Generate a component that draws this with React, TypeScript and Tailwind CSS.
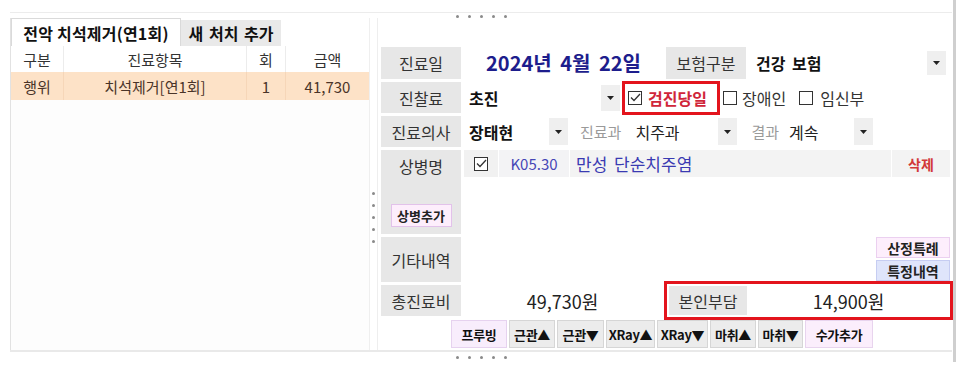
import React from "react";

const Caret = () => (
  <svg width="7" height="4" viewBox="0 0 7 4">
    <path d="M0 0h7L3.5 4z" fill="#222" />
  </svg>
);

const Drop = ({ h = "h-[24px]" }: { h?: string }) => (
  <div className={`w-[19px] ${h} bg-[#efefef] flex items-center justify-center shrink-0`}>
    <Caret />
  </div>
);

const Check = ({ checked = false }: { checked?: boolean }) => (
  <div className="w-[14px] h-[14px] border border-[#333] bg-white flex items-center justify-center shrink-0">
    {checked && (
      <svg width="11" height="9" viewBox="0 0 11 9">
        <path d="M1 4.5l3 3L10 1" fill="none" stroke="#333" strokeWidth="1.3" />
      </svg>
    )}
  </div>
);

const Label = ({ children }: { children: React.ReactNode }) => (
  <div className="w-[80px] shrink-0 bg-[#e7e7e7] flex items-center justify-center text-[16px] text-[#333]">
    {children}
  </div>
);

const Dots = ({ vertical = false }: { vertical?: boolean }) => (
  <div className={`flex ${vertical ? "flex-col gap-[9px]" : "gap-[9px]"}`}>
    {[0, 1, 2, 3, 4].map((i) => (
      <div key={i} className="w-[3px] h-[3px] rounded-full bg-[#8a8a8a]" />
    ))}
  </div>
);

export default function App() {
  const btns = [
    { t: "프루빙", w: "w-[56px]", c: "bg-[#f8edfc] border-[#e6d2ef]" },
    { t: "근관▲", w: "w-[46px]", c: "bg-[#ececec] border-[#d6d6d6]" },
    { t: "근관▼", w: "w-[47px]", c: "bg-[#ececec] border-[#d6d6d6]" },
    { t: "XRay▲", w: "w-[49px]", c: "bg-[#ececec] border-[#d6d6d6]" },
    { t: "XRay▼", w: "w-[51px]", c: "bg-[#ececec] border-[#d6d6d6]" },
    { t: "마취▲", w: "w-[46px]", c: "bg-[#ececec] border-[#d6d6d6]" },
    { t: "마취▼", w: "w-[45px]", c: "bg-[#ececec] border-[#d6d6d6]" },
    { t: "수가추가", w: "w-[68px]", c: "bg-[#fbeefc] border-[#e8d4ee]" },
  ];

  return (
    <div className="w-[966px] h-[375px] bg-white relative overflow-hidden font-['Noto_Sans_CJK_KR',sans-serif] text-[#333] leading-none">
      {/* top grip */}
      <div className="h-[12px]" />
      <div className="ml-[10px] w-[942px] h-px bg-[#ececec]" />
      <div className="absolute left-[456px] top-[15px]">
        <Dots />
      </div>

      <div className="ml-[10px] mt-[5px] w-[942px] h-[334px] flex border-b-2 border-[#e9e9e9]">
        {/* left panel */}
        <div className="w-[360px] flex flex-col border-l border-[#e2e2e2] border-r border-r-[#efefef]">
          <div className="h-[28px] flex items-end">
            <div className="w-[170px] h-[28px] bg-white border border-b-0 border-[#dadada] flex items-center justify-center text-[16px] font-bold text-[#111] tracking-[0.2px]">
              전악 치석제거(연1회)
            </div>
            <div className="w-[100px] h-[26px] bg-[#e9e9e9] flex items-center justify-center text-[16px] font-bold text-[#111] [word-spacing:2px]">
              새 처치 추가
            </div>
          </div>
          <div className="h-[26px] flex text-[15px] text-[#333] bg-white">
            <div className="w-[53px] flex items-center justify-center border-r border-[#ececec]">구분</div>
            <div className="w-[183px] flex items-center justify-center border-r border-[#ececec]">진료항목</div>
            <div className="w-[39px] flex items-center justify-center border-r border-[#ececec]">회</div>
            <div className="flex-1 flex items-center justify-center">금액</div>
          </div>
          <div className="h-[28px] flex text-[15px] text-[#4a3428] bg-[#fde2c7]">
            <div className="w-[53px] flex items-center justify-center border-r border-[#f6d6b8]">행위</div>
            <div className="w-[183px] flex items-center justify-center border-r border-[#f6d6b8]">치석제거[연1회]</div>
            <div className="w-[39px] flex items-center justify-center border-r border-[#f6d6b8]">1</div>
            <div className="flex-1 flex items-center justify-center">41,730</div>
          </div>
          <div className="flex-1 bg-[#fdfdfd]" />
        </div>

        {/* splitter */}
        <div className="w-[7px] flex items-center justify-center pt-[66px]">
          <Dots vertical />
        </div>

        {/* right panel */}
        <div className="w-[575px] pl-[3px] pr-[2px] pt-[29px] border-l border-[#eeeeee] flex flex-col gap-[3px]">
          {/* 진료일 */}
          <div className="h-[32px] flex gap-[2px]">
            <Label>진료일</Label>
            <div className="w-[201px] flex items-center justify-center text-[20px] font-bold text-[#1d1d8c] [word-spacing:4px]">
              2024년 4월 22일
            </div>
            <Label>보험구분</Label>
            <div className="flex-1 flex items-center pl-[8px] pr-[4px]">
              <span className="text-[16px] font-bold text-[#111] [word-spacing:3px]">건강 보험</span>
              <div className="ml-auto">
                <Drop />
              </div>
            </div>
          </div>

          {/* 진찰료 */}
          <div className="h-[31px] flex items-center">
            <div className="self-stretch flex">
              <Label>진찰료</Label>
            </div>
            <div className="w-[140px] pl-[8px] text-[16px] font-bold text-[#111]">초진</div>
            <Drop h="h-[26px]" />
            <div className="ml-[2px] w-[98px] h-[34px] border-[3px] border-[#e3141d] flex items-center pl-[3px] gap-[6px] shrink-0">
              <Check checked />
              <span className="text-[16px] font-bold text-[#d0263a]">검진당일</span>
            </div>
            <div className="ml-[3px] flex items-center gap-[5px]">
              <Check />
              <span className="text-[16px] text-[#333]">장애인</span>
            </div>
            <div className="ml-[13px] flex items-center gap-[7px]">
              <Check />
              <span className="text-[16px] text-[#333]">임신부</span>
            </div>
          </div>

          {/* 진료의사 */}
          <div className="h-[31px] flex items-center">
            <div className="self-stretch flex">
              <Label>진료의사</Label>
            </div>
            <div className="w-[88px] pl-[8px] text-[16px] font-bold text-[#111]">장태현</div>
            <Drop h="h-[27px]" />
            <span className="ml-[12px] text-[15px] text-[#9a9a9a]">진료과</span>
            <span className="ml-[14px] w-[83px] text-[16px] text-[#222]">치주과</span>
            <Drop h="h-[27px]" />
            <span className="ml-[14px] text-[15px] text-[#9a9a9a]">결과</span>
            <span className="ml-[10px] w-[65px] text-[16px] text-[#222]">계속</span>
            <Drop h="h-[27px]" />
          </div>

          {/* 상병명 */}
          <div className="h-[84px] flex">
            <div className="w-[80px] shrink-0 bg-[#e7e7e7] flex flex-col items-center">
              <div className="h-[31px] flex items-center text-[16px] text-[#333]">상병명</div>
              <div className="mt-[23px] w-[61px] h-[23px] bg-[#fdeefc] border border-[#e2c2ea] flex items-center justify-center text-[13px] font-bold text-[#222]">
                상병추가
              </div>
            </div>
            <div className="flex-1 flex flex-col pl-[3px]">
              <div className="h-[27px] flex gap-[1px]">
                <div className="w-[34px] bg-[#f1f1f1] flex items-center justify-center">
                  <Check checked />
                </div>
                <div className="w-[70px] bg-[#f3f3f5] flex items-center justify-center text-[15px] text-[#4646b6]">
                  K05.30
                </div>
                <div className="flex-1 bg-[#f3f3f3] flex items-center pl-[6px] text-[17px] text-[#3a3ab2] [word-spacing:3px]">
                  만성 단순치주염
                </div>
                <div className="w-[58px] bg-[#f3f3f3] flex items-center justify-center text-[14px] font-bold text-[#d23838]">
                  삭제
                </div>
              </div>
            </div>
          </div>

          {/* 기타내역 */}
          <div className="h-[45px] flex">
            <Label>기타내역</Label>
            <div className="flex-1 flex justify-end">
              <div className="w-[74px] flex flex-col gap-[2px]">
                <div className="h-[21px] bg-[#fdeefc] border border-[#ebd0f0] flex items-center justify-center text-[14px] font-bold text-[#222]">
                  산정특례
                </div>
                <div className="h-[21px] bg-[#dfe5fb] border border-[#c6cdf2] flex items-center justify-center text-[14px] font-bold text-[#222]">
                  특정내역
                </div>
              </div>
            </div>
          </div>

          {/* 총진료비 */}
          <div className="h-[31px] flex items-center">
            <div className="self-stretch flex">
              <Label>총진료비</Label>
            </div>
            <div className="w-[203px] text-center text-[18px] text-[#222]">49,730원</div>
            <div className="-mr-[3px] flex-1 h-[39px] border-[3px] border-[#e3141d] flex items-center pl-[2px]">
              <div className="w-[78px] h-[29px] bg-[#e7e7e7] flex items-center justify-center text-[16px] text-[#333]">
                본인부담
              </div>
              <div className="flex-1 text-center text-[18px] text-[#222]">14,900원</div>
            </div>
          </div>

          {/* buttons */}
          <div className="mt-[1px] h-[28px] flex gap-[2px] pl-[70px]">
            {btns.map((b) => (
              <div
                key={b.t}
                className={`${b.w} ${b.c} border flex items-center justify-center text-[13px] font-bold text-[#111] tracking-[-0.3px]`}
              >
                {b.t}
              </div>
            ))}
          </div>
        </div>
      </div>

      <div className="absolute left-[456px] top-[356px]">
        <Dots />
      </div>
      <div className="absolute left-[953px] top-0 w-[3px] h-[362px] bg-[#cfcfcf]" />
    </div>
  );
}
